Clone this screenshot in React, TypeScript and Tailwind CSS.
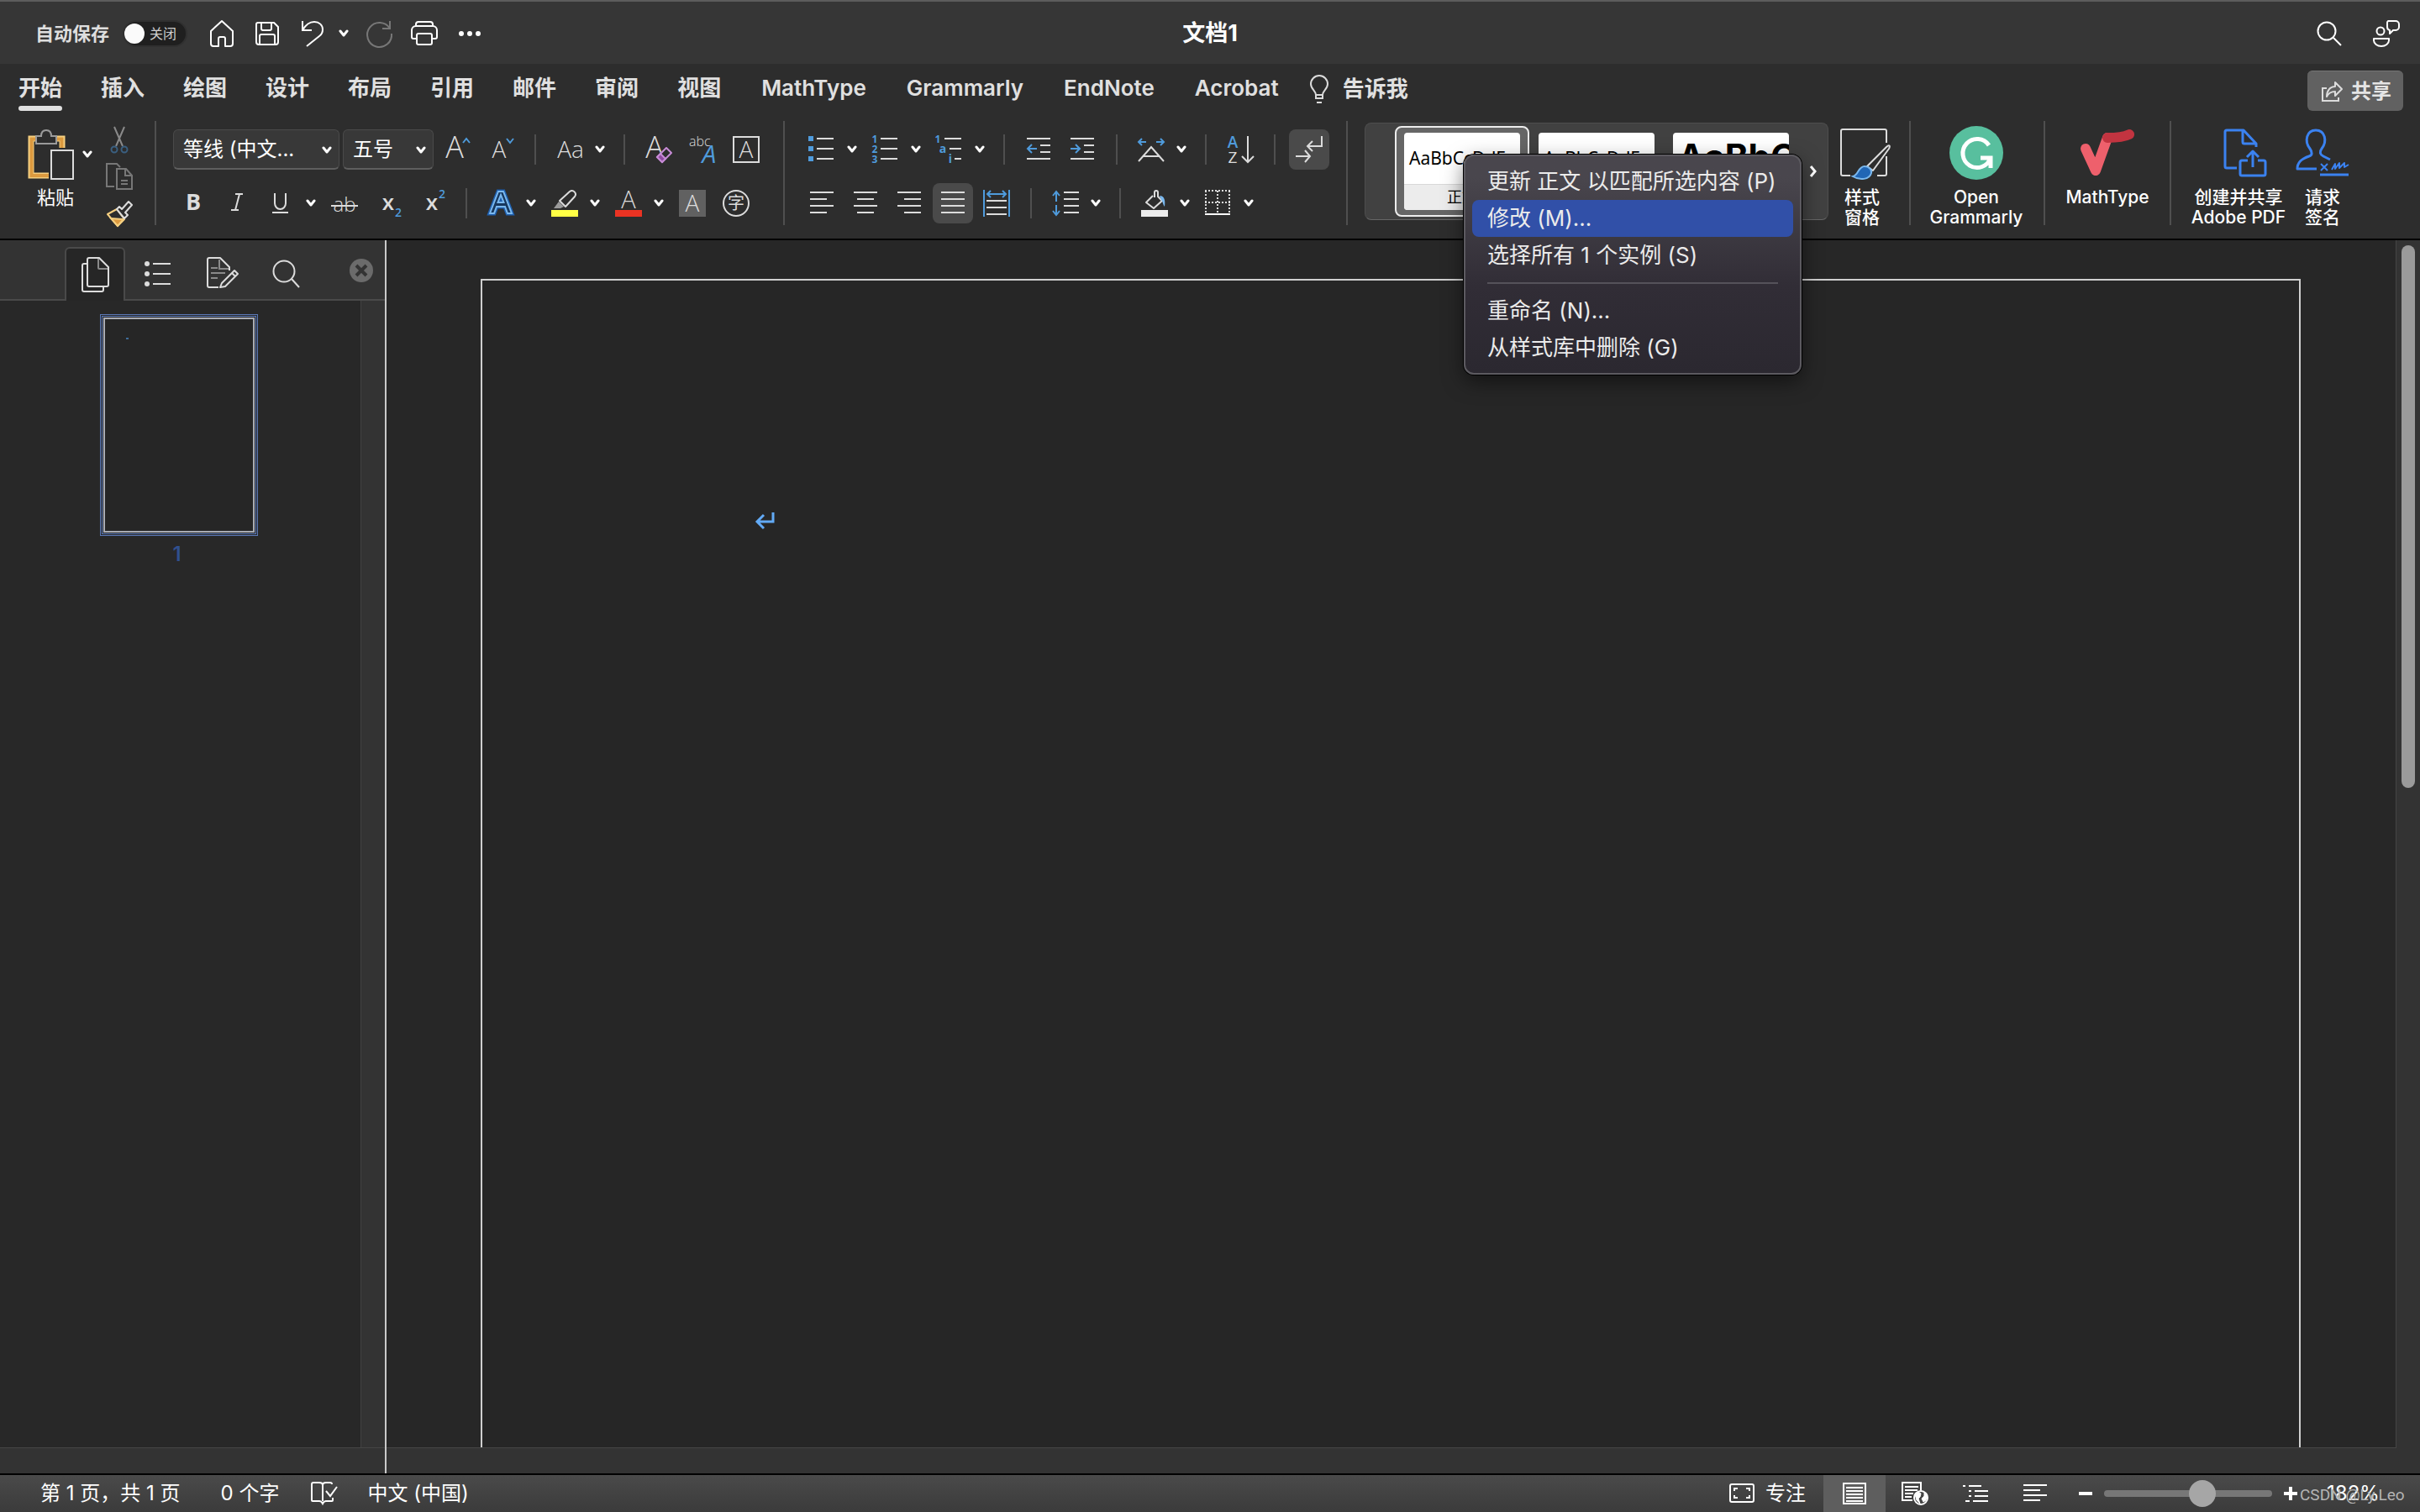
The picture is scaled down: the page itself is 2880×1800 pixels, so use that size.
import React from "react";

type Kids = { children?: React.ReactNode };

const LIGHT = "#dcdcdc";
const BLUE = "#4f9bdc";
const ICON_FONT = '"Open Sans", "Noto Sans", "Noto Sans CJK SC", sans-serif';

function Svg({ children, w = 32, h = 32, className = "" }: Kids & { w?: number; h?: number; className?: string }) {
  return (
    <svg
      width={w}
      height={h}
      viewBox={`0 0 ${w} ${h}`}
      fill="none"
      stroke={LIGHT}
      strokeWidth={2}
      className={`block shrink-0 overflow-visible ${className}`}
      aria-hidden="true"
    >
      {children}
    </svg>
  );
}

function T({
  x, y, size, fill = LIGHT, weight = 400, anchor = "middle", italic = false, children,
}: Kids & { x: number; y: number; size: number; fill?: string; weight?: number; anchor?: "middle" | "start"; italic?: boolean }) {
  return (
    <text x={x} y={y} fontSize={size} fill={fill} stroke="none" fontWeight={weight} textAnchor={anchor}
      fontFamily={ICON_FONT} fontStyle={italic ? "italic" : "normal"}>
      {children}
    </text>
  );
}

function Btn({ label, className = "", children }: Kids & { label: string; className?: string }) {
  return (
    <button type="button" aria-label={label} className={`flex shrink-0 items-center justify-center ${className}`}>
      {children}
    </button>
  );
}

function Chevron({ className = "" }: { className?: string }) {
  return (
    <svg width="12" height="10" viewBox="0 0 12 10" fill="none" stroke="#fff" strokeWidth="3" strokeLinecap="round" strokeLinejoin="round"
      className={`block shrink-0 ${className}`} aria-hidden="true">
      <path d="M2 2l4 5 4-5" />
    </svg>
  );
}

function Drop({ label, className = "" }: { label: string; className?: string }) {
  return (
    <Btn label={label} className={className}>
      <Chevron />
    </Btn>
  );
}

const SmallSep = ({ className = "" }: { className?: string }) => (
  <div className={`h-9 w-[2px] shrink-0 bg-[#4f4f4f] ${className}`} />
);
const BigSep = ({ className = "" }: { className?: string }) => (
  <div className={`mt-3 h-[124px] w-[2px] shrink-0 bg-[#4f4f4f] ${className}`} />
);

/* ---------- title bar ---------- */

function TitleBar() {
  return (
    <header className="relative flex h-[76px] shrink-0 items-center border-t-2 border-[#5c5c5c] bg-[#363636] pt-[2px] pr-6 pl-[42px]">
      <span id="autosave" className="text-[22px] leading-8 font-bold text-[#dedede]">自动保存</span>
      <button type="button" role="switch" aria-checked="false" aria-labelledby="autosave"
        className="ml-4 flex h-8 w-[77px] items-center rounded-full border-2 border-[#303030] bg-[#1f1f1f]">
        <span className="size-6 rounded-full bg-[#fafafa]" />
        <span className="ml-[6px] text-[16px] leading-6 text-[#cfcfcf]">关闭</span>
      </button>
      <Btn label="主页" className="ml-[25px]">
        <Svg w={32} h={34} className="text-white">
          <path stroke="#fff" strokeLinejoin="round" d="M3 14L16 2l13 12v15a3 3 0 0 1-3 3h-6v-9a2 2 0 0 0-2-2h-4a2 2 0 0 0-2 2v9H6a3 3 0 0 1-3-3z" />
        </Svg>
      </Btn>
      <Btn label="保存" className="ml-[22px]">
        <Svg>
          <g stroke="#fff" strokeLinejoin="round">
            <path d="M5 3h19l5 5v18a3 3 0 0 1-3 3H6a3 3 0 0 1-3-3V5a2 2 0 0 1 2-2z" />
            <path d="M9 3v7a2 2 0 0 0 2 2h8a2 2 0 0 0 2-2V3M7 29V19a2 2 0 0 1 2-2h14a2 2 0 0 1 2 2v10" />
          </g>
        </Svg>
      </Btn>
      <Btn label="撤消" className="ml-6">
        <Svg>
          <path stroke="#fff" d="M2 1v11h11M2 12C6 5 11 2 16 2c6 0 10 4 10 9 0 3-1 6-4 8L7 31" />
        </Svg>
      </Btn>
      <Drop label="撤消列表" className="ml-[13px]" />
      <Btn label="重复" className="ml-5">
        <Svg>
          <path stroke="#777" d="M29 1v9h-9M29 10A14.500 14.500 0 1 0 31 16" />
        </Svg>
      </Btn>
      <Btn label="打印" className="ml-[22px]">
        <Svg>
          <g stroke="#fff" strokeLinejoin="round">
            <path d="M7 22H3a2 2 0 0 1-2-2v-8a5 5 0 0 1 5-5h20a5 5 0 0 1 5 5v8a2 2 0 0 1-2 2h-4M6 7V5a3 3 0 0 1 3-3h14a3 3 0 0 1 3 3v2" />
            <path d="M9 16h14a2 2 0 0 1 2 2v9a2 2 0 0 1-2 2H9a2 2 0 0 1-2-2v-9a2 2 0 0 1 2-2z" />
          </g>
        </Svg>
      </Btn>
      <Btn label="更多" className="ml-[22px]">
        <Svg>
          <g stroke="none" fill="#fff">
            <circle cx="6" cy="16" r="3" />
            <circle cx="16" cy="16" r="3" />
            <circle cx="26" cy="16" r="3" />
          </g>
        </Svg>
      </Btn>
      <h1 className="pointer-events-none absolute inset-x-0 text-center text-[27px] leading-9 font-bold text-white">文档1</h1>
      <div className="ml-auto flex items-center gap-9">
        <Btn label="搜索">
          <Svg>
            <circle cx="13" cy="13" r="10.500" stroke="#fff" />
            <path stroke="#fff" d="M21 21l9 9" />
          </Svg>
        </Btn>
        <Btn label="帐户">
          <Svg>
            <g stroke="#fff" strokeLinejoin="round">
              <circle cx="9" cy="13" r="4.500" />
              <path d="M1 22h18v2c0 4-4 7-9 7s-9-3-9-7z" />
              <path d="M18 1h9a4 4 0 0 1 4 4v3a4 4 0 0 1-4 4h-3l-4 4v-4a4 4 0 0 1-3-4V4a3 3 0 0 1 1-3z" />
            </g>
          </Svg>
        </Btn>
      </div>
    </header>
  );
}

/* ---------- tabs ---------- */

const cjkTabs = ["开始", "插入", "绘图", "设计", "布局", "引用", "邮件", "审阅", "视图"];
const addinTabs = ["MathType", "Grammarly", "EndNote", "Acrobat"];

function TabBar() {
  return (
    <nav className="flex h-14 shrink-0 items-start pr-5 pl-[22px]" aria-label="功能区">
      <div role="tablist" className="flex">
        <div className="flex gap-[46px]">
          {cjkTabs.map((t, i) => (
            <button key={t} type="button" role="tab" aria-selected={i === 0} className="flex flex-col pt-[13px] text-[26px] leading-8 font-bold text-[#e0e0e0]">
              {t}
              {i === 0 && <span className="mt-[5px] h-[6px] w-full rounded-full bg-[#e0e0e0]" />}
            </button>
          ))}
        </div>
        <div className="ml-12 flex gap-12">
          {addinTabs.map((t) => (
            <button key={t} type="button" role="tab" aria-selected={false} className="flex pt-[13px] text-[26px] leading-8 font-semibold text-[#e0e0e0]">
              {t}
            </button>
          ))}
        </div>
      </div>
      <button type="button" className="ml-9 flex items-center gap-4 pt-[13px] text-[26px] leading-8 font-bold text-[#e0e0e0]">
        <Svg w={24} h={34}>
          <path d="M8 24c0-5-6-7-6-13a10 10 0 0 1 20 0c0 6-6 8-6 13v4H8zM8 24h8" />
          <path d="M9 33h6" strokeWidth="2" />
        </Svg>
        告诉我
      </button>
      <button type="button" className="mt-2 ml-auto flex h-12 items-center gap-[10px] rounded-md border-t border-[#757575] bg-[#616161] pr-[14px] pl-4 text-[24px] leading-8 font-bold text-[#e4e4e4]">
        <Svg w={26} h={26}>
          <path d="M7 9H2v15h19v-4" />
          <path strokeLinejoin="round" d="M17 2l8 8-8 8v-5c-5 0-8 2-10 6 0-7 4-12 10-12z" />
        </Svg>
        共享
      </button>
    </nav>
  );
}

/* ---------- ribbon groups ---------- */

function ClipboardGroup() {
  return (
    <div className="flex shrink-0 pt-[18px]">
      <button type="button" className="mt-1 ml-[34px] flex w-[54px] flex-col items-end">
        <Svg w={54} h={60}>
          <path d="M24 55H3V11h37v12" stroke="#f5cf80" strokeWidth="7" />
          <path d="M24 55H3.500V11.500h36V23" stroke="#dc9a3f" strokeWidth="4" />
          <path d="M9 17V8h6c0-4 2-7 6-7s6 3 6 7h6v9z" stroke="#9a9a9a" strokeWidth="2" fill="#2d2d2d" />
          <path d="M24 22h32v40H24z" fill="#2d2d2d" stroke="none" />
          <rect x="27" y="25" width="26" height="34" fill="#2d2d2d" />
        </Svg>
        <span className="mt-[9px] text-[22px] leading-6 whitespace-nowrap text-white">粘贴</span>
      </button>
      <Drop label="粘贴选项" className="mt-6 ml-[10px] h-5" />
      <div className="ml-4 flex flex-col gap-3">
        <Btn label="剪切">
          <Svg>
            <path stroke="#8a8a8a" d="M10 1l10 23M22 1L12 24" />
            <circle cx="10" cy="28" r="3.500" stroke="#3a5f80" />
            <circle cx="22" cy="28" r="3.500" stroke="#3a5f80" />
          </Svg>
        </Btn>
        <Btn label="复制">
          <Svg>
            <g stroke="#777">
              <path d="M10 28H1V1h12l4 4" />
              <path d="M13 7h11l7 8v16H13zM23 7v8h8M18 21h8M18 25h8" />
            </g>
          </Svg>
        </Btn>
        <Btn label="格式刷">
          <Svg>
            <path d="M2 17l11-6 9 12-8 8z" stroke="#f5cf80" fill="#2d2d2d" strokeLinejoin="round" />
            <path d="M6 22l15 1-7 8z" fill="#dc9a3f" stroke="#f5cf80" />
            <path d="M13 11l3-3 3 3 8-9 4 4-8 9 3 3-4 4z" fill="#2d2d2d" stroke={LIGHT} strokeLinejoin="round" />
          </Svg>
        </Btn>
      </div>
    </div>
  );
}

function Picker({ label, value, className }: { label: string; value: string; className: string }) {
  return (
    <div className={`relative flex shrink-0 ${className}`}>
      <select aria-label={label} defaultValue={value}
        className="h-12 w-full appearance-none truncate rounded-md border border-b-2 border-[#4a4a4a] border-b-[#5e5e5e] bg-[#383838] pl-[11px] text-[24px] leading-8 text-white">
        <option>{value}</option>
      </select>
      <Chevron className="pointer-events-none absolute top-5 right-[9px]" />
    </div>
  );
}

function FontGroup() {
  return (
    <div className="ml-5 flex shrink-0 flex-col gap-4 pt-[22px]">
      <div className="flex h-12 items-center">
        <Picker label="字体" value="等线 (中文..." className="w-[198px]" />
        <Picker label="字号" value="五号" className="ml-1 w-[108px]" />
        <Btn label="增大字号" className="ml-[14px]">
          <Svg>
            <T x={11} y={26} size={36} weight={300}>A</T>
            <path d="M21 8l4-5 4 5" stroke={BLUE} />
          </Svg>
        </Btn>
        <Btn label="减小字号" className="ml-[22px]">
          <Svg>
            <T x={10} y={26} size={28} weight={300}>A</T>
            <path d="M19 3l4 5 4-5" stroke={BLUE} />
          </Svg>
        </Btn>
        <SmallSep className="ml-5" />
        <Btn label="更改大小写" className="ml-6">
          <Svg w={34}>
            <T x={17} y={26} size={28} weight={300}>Aa</T>
          </Svg>
        </Btn>
        <Drop label="大小写选项" className="ml-3" />
        <SmallSep className="ml-[22px]" />
        <Btn label="清除格式" className="ml-6">
          <Svg>
            <T x={11} y={26} size={36} weight={300}>A</T>
            <path d="M13 25L24 13l8 8-11 11z" fill="#2d2d2d" stroke="none" />
            <path d="M14 25l11-11 6 6-11 11z" stroke="#c78bd6" strokeLinejoin="round" />
            <path d="M14 25l4-4 6 6-4 4z" fill="#8f4aa0" stroke="#c78bd6" />
          </Svg>
        </Btn>
        <Btn label="拼音指南" className="ml-5">
          <Svg w={34}>
            <T x={0} y={12} size={16} anchor="start" weight={300}>abc</T>
            <T x={24} y={32} size={30} fill={BLUE} italic>A</T>
          </Svg>
        </Btn>
        <Btn label="字符边框" className="ml-[18px]">
          <Svg>
            <rect x="1" y="1" width="30" height="30" />
            <T x={16} y={26} size={28} weight={300}>A</T>
          </Svg>
        </Btn>
      </div>
      <div className="flex h-12 items-center">
        <Btn label="加粗" className="ml-2"><Svg><T x={16} y={24} size={27} weight={700}>B</T></Svg></Btn>
        <Btn label="倾斜" className="ml-5">
          <Svg><path d="M14 5h9M9 24h9M19 5l-5 19" /></Svg>
        </Btn>
        <Btn label="下划线" className="ml-5">
          <Svg>
            <path d="M9 4v12a6.500 7 0 0 0 13 0V4M6 27h19" />
          </Svg>
        </Btn>
        <Drop label="下划线选项" className="ml-[14px]" />
        <Btn label="删除线" className="ml-[18px]">
          <Svg>
            <T x={16} y={26} size={24} weight={300}>ab</T>
            <path d="M0 19h32" />
          </Svg>
        </Btn>
        <Btn label="下标" className="ml-6">
          <Svg>
            <T x={12} y={24} size={26} weight={600}>x</T>
            <T x={24} y={32} size={14} weight={600} fill={BLUE}>2</T>
          </Svg>
        </Btn>
        <Btn label="上标" className="ml-5">
          <Svg>
            <T x={12} y={24} size={26} weight={600}>x</T>
            <T x={24} y={10} size={14} weight={600} fill={BLUE}>2</T>
          </Svg>
        </Btn>
        <SmallSep className="ml-5" />
        <Btn label="文本效果" className="ml-6">
          <Svg>
            <path d="M3 28L13 2h6l10 26h-5l-3-8H11l-3 8zM12.500 15h7L16 6z" stroke="#1f5fae" strokeWidth="5" />
            <path d="M3 28L13 2h6l10 26h-5l-3-8H11l-3 8zM12.500 15h7L16 6z" stroke="#7ab8ee" strokeWidth="2" fill="#17375e" />
          </Svg>
        </Btn>
        <Drop label="文本效果选项" className="ml-[14px]" />
        <Btn label="突出显示" className="ml-[18px]">
          <Svg>
            <rect x="0" y="24" width="32" height="8" fill="#ffff45" stroke="none" />
            <path d="M3 22l6-8 6 6-4 2z" fill="#9a9a9a" stroke="none" />
            <path d="M10 13L22 2c4-3 9 2 6 6L17 20z" strokeLinejoin="round" />
          </Svg>
        </Btn>
        <Drop label="突出显示颜色" className="ml-[14px]" />
        <Btn label="字体颜色" className="ml-[18px]">
          <Svg>
            <T x={16} y={22} size={29} weight={300}>A</T>
            <rect x="0" y="24" width="32" height="8" fill="#eb3323" stroke="none" />
          </Svg>
        </Btn>
        <Drop label="字体颜色选项" className="ml-[14px]" />
        <Btn label="字符底纹" className="ml-[18px]">
          <Svg>
            <rect width="32" height="32" fill="#616161" stroke="none" />
            <T x={16} y={26} size={28} weight={300}>A</T>
          </Svg>
        </Btn>
        <Btn label="带圈字符" className="ml-5">
          <Svg>
            <circle cx="16" cy="16" r="15" />
            <T x={16} y={23} size={20}>字</T>
          </Svg>
        </Btn>
      </div>
    </div>
  );
}

function AlignLines({ rows }: { rows: [number, number][] }) {
  return (
    <Svg>
      <path d={rows.map(([a, b], i) => `M${a} ${3 + i * 8}H${b}`).join("")} />
    </Svg>
  );
}

function ParagraphGroup() {
  return (
    <div className="ml-[26px] flex shrink-0 flex-col gap-4 pt-[22px]">
      <div className="flex h-12 items-center">
        <Btn label="项目符号">
          <Svg>
            <path d="M2 3h6M2 15h6M2 27h6" stroke={BLUE} strokeWidth="6" />
            <path d="M12 3h20M12 15h20M12 27h20" />
          </Svg>
        </Btn>
        <Drop label="项目符号库" className="ml-4" />
        <Btn label="编号" className="ml-4">
          <Svg>
            <T x={5} y={8} size={12} weight={700} fill={BLUE}>1</T>
            <T x={5} y={20} size={12} weight={700} fill={BLUE}>2</T>
            <T x={5} y={32} size={12} weight={700} fill={BLUE}>3</T>
            <path d="M12 3h20M12 15h20M12 27h20" />
          </Svg>
        </Btn>
        <Drop label="编号库" className="ml-4" />
        <Btn label="多级列表" className="ml-4">
          <Svg>
            <T x={4} y={8} size={12} weight={700} fill={BLUE}>1</T>
            <T x={10} y={20} size={14} weight={700} fill={BLUE}>a</T>
            <T x={19} y={32} size={14} weight={700} fill={BLUE}>i</T>
            <path d="M12 3h20M18 15h14M24 27h8" />
          </Svg>
        </Btn>
        <Drop label="多级列表库" className="ml-4" />
        <SmallSep className="ml-[22px]" />
        <Btn label="减少缩进" className="ml-6">
          <Svg>
            <path d="M2 3h28M18 11h12M18 19h12M2 27h28" />
            <path d="M14 15H3M8 10l-5 5 5 5" stroke={BLUE} />
          </Svg>
        </Btn>
        <Btn label="增加缩进" className="ml-5">
          <Svg>
            <path d="M2 3h28M18 11h12M18 19h12M2 27h28" />
            <path d="M2 15h11M8 10l5 5-5 5" stroke={BLUE} />
          </Svg>
        </Btn>
        <SmallSep className="ml-6" />
        <Btn label="中文版式" className="ml-6">
          <Svg>
            <path d="M1 30l15-17 15 17M6 24h20" />
            <path d="M10 7H1M5 3L1 7l4 4M22 7h9M27 3l4 4-4 4" stroke={BLUE} />
          </Svg>
        </Btn>
        <Drop label="中文版式选项" className="ml-[14px]" />
        <SmallSep className="ml-[22px]" />
        <Btn label="排序" className="ml-6">
          <Svg w={34}>
            <T x={7} y={14} size={19} fill={BLUE} weight={600}>A</T>
            <T x={7} y={32} size={19}>Z</T>
            <path d="M25 0v30M18 24l7 7 7-7" />
          </Svg>
        </Btn>
        <SmallSep className="ml-[22px]" />
        <Btn label="显示编辑标记" className="ml-4 size-12 rounded-lg bg-[#4a4a4a]">
          <Svg>
            <path d="M31 0v12H15M20 6l-6 6 6 6M0 24h16M11 17l6 7-6 7" />
          </Svg>
        </Btn>
      </div>
      <div className="flex h-12 items-center">
        <Btn label="左对齐" className="ml-[2px]"><AlignLines rows={[[2, 30], [2, 22], [2, 30], [2, 22]]} /></Btn>
        <Btn label="居中" className="ml-5"><AlignLines rows={[[2, 30], [6, 26], [2, 30], [6, 26]]} /></Btn>
        <Btn label="右对齐" className="ml-5"><AlignLines rows={[[2, 30], [10, 30], [2, 30], [10, 30]]} /></Btn>
        <Btn label="两端对齐" className="ml-3 size-12 rounded-lg bg-[#4a4a4a]">
          <AlignLines rows={[[2, 30], [2, 30], [2, 30], [2, 30]]} />
        </Btn>
        <Btn label="分散对齐" className="ml-3">
          <Svg>
            <path d="M1 0v32M31 0v32M5 5h22M9 1L5 5l4 4M23 1l4 4-4 4" stroke={BLUE} />
            <path d="M4 13h24M4 21h24M4 29h24" />
          </Svg>
        </Btn>
        <SmallSep className="ml-6" />
        <Btn label="行距" className="ml-6">
          <Svg>
            <path d="M5 14V3M1 7l4-5 4 5M5 18v11M1 25l4 5 4-5" stroke={BLUE} />
            <path d="M14 3h18M14 11h18M14 19h18M14 27h18" />
          </Svg>
        </Btn>
        <Drop label="行距选项" className="ml-[14px]" />
        <SmallSep className="ml-[22px]" />
        <Btn label="底纹" className="ml-6">
          <Svg>
            <rect x="0" y="24" width="32" height="8" fill="#ececec" stroke="none" />
            <path d="M14 7l-8 8 9 7 10-9-5-5V3a2 2 0 0 0-4 0v6" strokeLinejoin="round" />
            <path d="M22 7c6 0 7 6 6 13-2-2-2-6-4-8z" fill="#7ab8ee" stroke="none" />
          </Svg>
        </Btn>
        <Drop label="底纹颜色" className="ml-[14px]" />
        <Btn label="边框" className="ml-[18px]">
          <Svg>
            <path d="M0 1h30M1 1v26M29 1v26M15 1v26M0 15h30" strokeDasharray="2 2" />
            <path d="M0 29h30" stroke="#fff" />
          </Svg>
        </Btn>
        <Drop label="边框选项" className="ml-[14px]" />
      </div>
    </div>
  );
}

function StyleCard({ name, sample }: { name: string; sample: React.ReactNode }) {
  return (
    <span className="flex h-[92px] w-[138px] flex-col overflow-hidden rounded bg-white text-black">
      <span className="flex h-[61px] items-center overflow-hidden pl-[6px] text-left whitespace-nowrap">{sample}</span>
      <span className="flex flex-1 items-center justify-center border-t border-[#d8d8d8] bg-[#ececec] text-[18px] leading-6">{name}</span>
    </span>
  );
}

function MenuItem({ children, active = false }: Kids & { active?: boolean }) {
  return (
    <button type="button" role="menuitem"
      className={`flex h-11 items-center rounded-lg px-[18px] text-left text-[26px] leading-9 whitespace-nowrap text-[#ebebeb] ${active ? "bg-[#3150a8]" : ""}`}>
      {children}
    </button>
  );
}

function ContextMenu() {
  return (
    <div role="menu"
      className="absolute top-[37px] left-[117px] z-20 flex w-[402px] flex-col rounded-xl border-2 border-[#5c5a60] bg-linear-to-b from-[#49464d] from-10% via-[#312d36] via-60% to-[#2b2830] p-2 shadow-[0_0_0_1px_#000,0_8px_24px_rgba(0,0,0,0.5)]">
      <MenuItem>更新 正文 以匹配所选内容 (P)</MenuItem>
      <MenuItem active>修改 (M)...</MenuItem>
      <MenuItem>选择所有 1 个实例 (S)</MenuItem>
      <div role="separator" className="mx-[18px] my-[10px] h-[2px] bg-[#55525a]" />
      <MenuItem>重命名 (N)...</MenuItem>
      <MenuItem>从样式库中删除 (G)</MenuItem>
    </div>
  );
}

function StylesGallery() {
  return (
    <div className="relative mt-[14px] ml-5 flex h-[116px] w-[552px] shrink-0 items-start rounded-lg border border-[#4d4d4d] border-b-[#666] bg-[#414141] pt-[3px] pl-[35px]">
      <button type="button" aria-pressed="true" className="flex h-[108px] w-40 items-center justify-center rounded-lg border-2 border-[#ededed] bg-[#666]">
        <StyleCard name="正文" sample={<span className="font-['Noto_Sans'] text-[21px]">AaBbCcDdEe</span>} />
      </button>
      <button type="button" className="mt-2 ml-[11px]">
        <StyleCard name="无间隔" sample={<span className="font-['Noto_Sans'] text-[21px]">AaBbCcDdEe</span>} />
      </button>
      <button type="button" className="mt-2 ml-[22px]">
        <StyleCard name="标题 1" sample={<span className="pb-1 text-[42px] font-bold">AaBbC</span>} />
      </button>
      <Btn label="更多样式" className="ml-auto h-[108px] w-[34px]">
        <svg width="10" height="16" viewBox="0 0 10 16" fill="none" stroke="#fff" strokeWidth="3" aria-hidden="true">
          <path d="M2 2l5 6-5 6" />
        </svg>
      </Btn>
      <ContextMenu />
    </div>
  );
}

function BigButton({ icon, lines, className }: { icon: React.ReactNode; lines: string[]; className: string }) {
  return (
    <button type="button" className={`flex shrink-0 flex-col items-center pt-[18px] ${className}`}>
      <span className="flex h-16 items-center">{icon}</span>
      <span className="mt-[9px] flex flex-col items-center text-[21px] leading-6 font-medium whitespace-nowrap text-white">
        {lines.map((l) => <span key={l}>{l}</span>)}
      </span>
    </button>
  );
}

function Ribbon() {
  return (
    <section className="flex h-[154px] shrink-0 items-start border-b-2 border-black" aria-label="开始">
      <ClipboardGroup />
      <BigSep className="ml-[26px]" />
      <FontGroup />
      <BigSep className="ml-7" />
      <ParagraphGroup />
      <BigSep className="ml-5" />
      <StylesGallery />
      <BigButton className="ml-2 w-[64px]" lines={["样式", "窗格"]} icon={
        <Svg w={60} h={60} className="ml-1">
          <path d="M46 57h9a2 2 0 0 0 2-2V34M57 18V4a2 2 0 0 0-2-2H5a2 2 0 0 0-2 2v51a2 2 0 0 0 2 2h9" />
          <path d="M34 46L57 23c3-3 5-2 3 2L41 51z" strokeLinejoin="round" />
          <path d="M17 58c7-1 6-12 14-12 5 0 9 4 8 8-2 8-14 9-22 4z" fill="#2166b5" stroke="#7ab8ee" />
        </Svg>
      } />
      <BigSep className="ml-6" />
      <BigButton className="ml-[22px] w-[112px]" lines={["Open", "Grammarly"]} icon={
        <Svg w={64} h={64}>
          <circle cx="32" cy="32" r="32" fill="#58bf9e" stroke="none" />
          <path d="M47 23A17 17 0 1 0 49 38M37 38h12v12" stroke="#fff" strokeWidth="5" />
        </Svg>
      } />
      <BigSep className="ml-6" />
      <BigButton className="ml-5 w-[108px]" lines={["MathType"]} icon={
        <Svg w={66} h={58}>
          <g strokeWidth="12" strokeLinecap="round" strokeLinejoin="round">
            <path d="M7 24l12 26L33 11" stroke="#ee606c" />
            <path d="M33 11c8 0 18 0 26-4" stroke="#c23440" />
          </g>
        </Svg>
      } />
      <BigSep className="ml-5" />
      <BigButton className="ml-6 w-[112px]" lines={["创建并共享", "Adobe PDF"]} icon={
        <Svg w={52} h={58} className="ml-4">
          <g stroke="#3b82f0" strokeWidth="3" strokeLinejoin="round">
            <path d="M16 47H4a2 2 0 0 1-2-2V4a2 2 0 0 1 2-2h20l15 16v4M23 2v14a2 2 0 0 0 2 2h14" />
            <path d="M29 38h-7a2 2 0 0 0-2 2v14a2 2 0 0 0 2 2h26a2 2 0 0 0 2-2V40a2 2 0 0 0-2-2h-7M35 46V28M28 34l7-7 7 7" />
          </g>
        </Svg>
      } />
      <BigButton className="ml-3 w-[64px]" lines={["请求", "签名"]} icon={
        <Svg w={64} h={58}>
          <g stroke="#3b82f0" strokeWidth="3" strokeLinejoin="round">
            <path d="M25 48H2c0-8 5-12 14-15 4-1 4-5 1-9-7-9-4-22 7-22s14 13 7 22c-3 4-2 7 2 9l8 4" />
            <path d="M30 42l8 8M38 42l-8 8M43 49l4-7v6l5-7v6l6-6v5l5-3" strokeWidth="2" />
            <path d="M29 55h34" />
          </g>
        </Svg>
      } />
    </section>
  );
}

/* ---------- navigation pane ---------- */

function NavPane() {
  return (
    <aside className="flex w-[460px] shrink-0 flex-col border-r-2 border-[#c9c9c9] bg-[#333]" aria-label="导航">
      <div className="flex h-[72px] shrink-0 items-end border-b-2 border-[#4a4a4a] pl-[77px]">
        <Btn label="缩略图" className="-mb-[2px] h-16 w-[72px] rounded-t-md border-2 border-b-0 border-[#4a4a4a] bg-[#262626]">
          <Svg w={34} h={42}>
            <g strokeLinejoin="round">
              <path d="M8 8H4a2 2 0 0 0-2 2v29a2 2 0 0 0 2 2h21a2 2 0 0 0 2-2v-4" />
              <path d="M10 1h12l11 11v21a2 2 0 0 1-2 2H10a2 2 0 0 1-2-2V3a2 2 0 0 1 2-2z" />
              <path d="M21 2v11a1 1 0 0 0 1 1h10" stroke="#8a8a8a" />
            </g>
          </Svg>
        </Btn>
        <Btn label="文档结构图" className="mb-3 ml-[22px]">
          <Svg w={32} h={36}>
            <g fill={LIGHT} stroke="none">
              <circle cx="4" cy="6" r="3" />
              <circle cx="4" cy="18" r="3" />
              <circle cx="4" cy="30" r="3" />
            </g>
            <path d="M11 6h21M11 18h21M11 30h21" />
          </Svg>
        </Btn>
        <Btn label="审阅窗格" className="mb-3 ml-[42px]">
          <Svg w={40} h={38}>
            <path d="M6 13h8M6 19h17M6 25h8" stroke="#8a8a8a" />
            <path d="M16 3v11h12" stroke="#8a8a8a" />
            <path d="M15 36H4a2 2 0 0 1-2-2V3a2 2 0 0 1 2-2h13l11 11v4" strokeLinejoin="round" />
            <path d="M19 31L34 16l4 4-15 15-6 1zM31 19l4 4" strokeLinejoin="round" />
          </Svg>
        </Btn>
        <Btn label="查找" className="mb-3 ml-[38px]">
          <Svg w={36} h={36}>
            <circle cx="15" cy="15" r="12.500" />
            <path d="M24 24l9 10" />
          </Svg>
        </Btn>
        <Btn label="关闭窗格" className="mr-[14px] mb-5 ml-auto">
          <Svg w={28} h={28}>
            <circle cx="14" cy="14" r="14" fill="#6b6b6b" stroke="none" />
            <path d="M8 8l12 12M20 8L8 20" stroke="#333" strokeWidth="4" />
          </Svg>
        </Btn>
      </div>
      <div className="mb-[30px] flex min-h-0 flex-1 border-b border-[#454545]">
        <div className="flex flex-1 flex-col items-center border-r border-[#424242] bg-[#282828] pt-4 pr-1">
          <button type="button" aria-label="第 1 页"
            className="h-[264px] w-[188px] border border-[#5b79b8] bg-[#282828] p-[1px]">
            <span className="block h-full w-full border border-[#5b79b8] p-[1px]">
              <span className="block h-full w-full border-2 border-[#a9acb4] bg-[#262626] pt-[22px] pl-[25px]">
                <span className="block h-[2px] w-[3px] bg-[#3f6d99]" />
              </span>
            </span>
          </button>
          <span className="mt-[6px] pr-1 text-[24px] leading-8 font-semibold text-[#30508f]">1</span>
        </div>
        <div className="w-7" />
      </div>
    </aside>
  );
}

/* ---------- document ---------- */

function Document() {
  return (
    <main className="flex min-w-0 flex-1 bg-[#333]">
      <div className="mb-[30px] flex min-w-0 flex-1 border-r border-b border-[#454545] bg-[#272727] pt-[46px] pr-[113px] pl-28">
        <div className="flex-1 border-2 border-b-0 border-[#cfcfcf] bg-[#262626] pt-[275px] pl-[324px]">
          <Svg w={26} h={24}>
            <path d="M22 1v11H4M11 4l-8 8 8 8" stroke="#62aaf6" strokeWidth="3" />
          </Svg>
        </div>
      </div>
      <div className="w-7 shrink-0 pt-[6px] pl-[6px]">
        <div className="h-[646px] w-4 rounded-full bg-[#9a9a9a]" />
      </div>
    </main>
  );
}

/* ---------- status bar ---------- */

function StatusBar() {
  return (
    <footer className="flex h-[46px] shrink-0 items-center border-t-2 border-black bg-linear-to-b from-[#4a4a4a] to-[#3b3b3b] pr-4 pl-12 text-[24px] leading-8 text-white">
      <button type="button">第 1 页，共 1 页</button>
      <button type="button" className="ml-12">0 个字</button>
      <Btn label="拼写检查" className="ml-[37px]">
        <Svg w={34} h={30}>
          <g stroke="#fff">
            <path d="M15 24V5c0-2-2-3-4-3H4a2 2 0 0 0-2 2v19a1 1 0 0 0 1 1h8c2 0 3 1 4 3 1-2 2-3 4-3h7a1 1 0 0 0 1-1v-3M15 5c0-2 2-3 4-3h5a2 2 0 0 1 2 2" />
            <path d="M19 12l5 6 8-11" />
          </g>
        </Svg>
      </Btn>
      <button type="button" className="ml-[34px]">中文 (中国)</button>

      <div className="ml-auto flex h-full items-center">
        <button type="button" className="flex items-center gap-[13px]">
          <Svg w={30} h={26}>
            <g stroke="#fff">
              <rect x="1" y="2" width="28" height="21" rx="2" />
              <path d="M6 10V7h4M20 7h4v3M24 15v3h-4M10 18H6v-3" />
            </g>
          </Svg>
          专注
        </button>
        <Btn label="页面视图" className="ml-[21px] h-full w-[74px] bg-[#5e5e5e]">
          <Svg w={30} h={28}>
            <path stroke="#fff" d="M2 2h26v24H2zM5 7h20M5 11h20M5 15h20M5 19h20M5 23h20" />
          </Svg>
        </Btn>
        <Btn label="Web 视图" className="ml-[18px]">
          <Svg w={34} h={30}>
            <path stroke="#fff" d="M14 23H2V2h22v9M5 7h16M5 11h15M5 15h10M5 19h8" />
            <circle cx="24" cy="20" r="8" fill="#444" stroke="#fff" />
            <path d="M17 16l4-3 3 2-1 4-2 2 2 6-4-4zM28 13l3 5-1 5-3 2-2-4 3-3z" fill="#fff" stroke="#fff" strokeWidth="1" />
          </Svg>
        </Btn>
        <Btn label="大纲视图" className="ml-10">
          <Svg w={32} h={26}>
            <path stroke="#fff" d="M0 4h3M7 4h15M7 10h3M14 10h16M7 16h3M14 16h16M3 22h5M12 22h18" />
          </Svg>
        </Btn>
        <Btn label="草稿视图" className="ml-10">
          <Svg w={28} h={26}>
            <path stroke="#fff" d="M0 3h28M0 9h20M0 15h28M0 21h20" />
          </Svg>
        </Btn>
        <Btn label="缩小" className="ml-[38px]">
          <Svg w={16} h={16}>
            <path d="M0 8h16" stroke="#fff" strokeWidth="4" />
          </Svg>
        </Btn>
        <input type="range" aria-label="缩放" min={0} max={100} defaultValue={60}
          className="ml-[14px] h-2 w-[200px] appearance-none rounded-full bg-[#777] [&::-webkit-slider-thumb]:size-8 [&::-webkit-slider-thumb]:appearance-none [&::-webkit-slider-thumb]:rounded-full [&::-webkit-slider-thumb]:bg-[#a6a6a6]" />
        <Btn label="放大" className="ml-[14px]">
          <Svg w={16} h={16}>
            <path d="M0 8h16M8 0v16" stroke="#fff" strokeWidth="4" />
          </Svg>
        </Btn>
        <div className="relative ml-[3px] flex w-[127px] justify-center">
          <button type="button">182%</button>
          <span className="absolute top-[2px] left-0 font-[Roboto] text-[19px] leading-8 whitespace-nowrap text-[#b4b4b4]">CSDN @Ly.Leo</span>
        </div>
      </div>
    </footer>
  );
}

export default function App() {
  return (
    <div className="flex h-screen min-h-[900px] w-full flex-col overflow-hidden bg-[#2d2d2d] font-[Inter,'Noto_Sans_CJK_SC',sans-serif]">
      <TitleBar />
      <TabBar />
      <Ribbon />
      <div className="flex min-h-0 flex-1">
        <NavPane />
        <Document />
      </div>
      <StatusBar />
    </div>
  );
}
